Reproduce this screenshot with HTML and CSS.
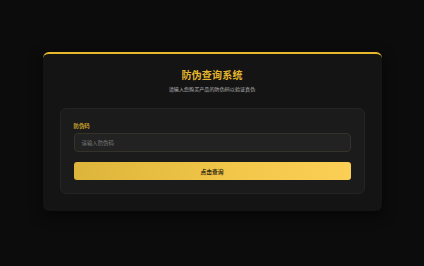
FILE: index.html
```html
<!DOCTYPE html>
<html lang="zh">
<head>
<meta charset="utf-8">
<link rel="stylesheet" href="styles.css">
</head>
<body>
<div class="page">
  <div class="card">
    <h1 class="title">防伪查询系统</h1>
    <p class="subtitle">请输入您购买产品的防伪码以验证真伪</p>
    <div class="panel">
      <label class="label">防伪码</label>
      <div class="input">请输入防伪码</div>
      <div class="button">点击查询</div>
    </div>
  </div>
</div>
</body>
</html>
```
FILE: styles.css
```css
* { box-sizing: border-box; }
html, body {
  margin: 0;
  padding: 0;
  background: #0c0c0c;
  font-family: "Noto Sans CJK SC", "Noto Sans", sans-serif;
}
.page {
  width: 424px;
  height: 266px;
  display: flex;
  justify-content: center;
  padding-top: 52px;
}
.card {
  width: 339px;
  height: 159px;
  background: #141414;
  border-top: 2px solid #e6b82e;
  border-radius: 6px;
  padding: 13px 17px 0;
  box-shadow: 0 4px 14px rgba(0,0,0,0.6);
  display: flex;
  flex-direction: column;
  align-items: stretch;
}
.title {
  margin: 0;
  text-align: center;
  font-size: 10px;
  line-height: 16px;
  font-weight: 700;
  color: #e3b52e;
  letter-spacing: 0.2px;
}
.subtitle {
  margin: 2px 0 0;
  text-align: center;
  font-size: 5.1px;
  line-height: 8px;
  color: #b5b5b5;
}
.panel {
  margin-top: 15px;
  background: #1b1b1b;
  border: 1px solid #242424;
  border-radius: 6px;
  padding: 13px 13px 13px;
  display: flex;
  flex-direction: column;
}
.label {
  font-size: 5.4px;
  line-height: 8px;
  color: #c9a22a;
  font-weight: 700;
}
.input {
  margin-top: 3px;
  height: 19px;
  background: #222222;
  border: 1px solid #353229;
  border-radius: 4px;
  padding-left: 7px;
  display: flex;
  align-items: center;
  font-size: 5.4px;
  color: #7a7a7a;
}
.button {
  margin-top: 10px;
  height: 18px;
  border-radius: 3px;
  background: linear-gradient(90deg, #ddb53a 0%, #f2c74a 60%, #fbcf55 100%);
  display: flex;
  align-items: center;
  justify-content: center;
  font-size: 5.8px;
  font-weight: 700;
  color: #3a2e10;
}
```
